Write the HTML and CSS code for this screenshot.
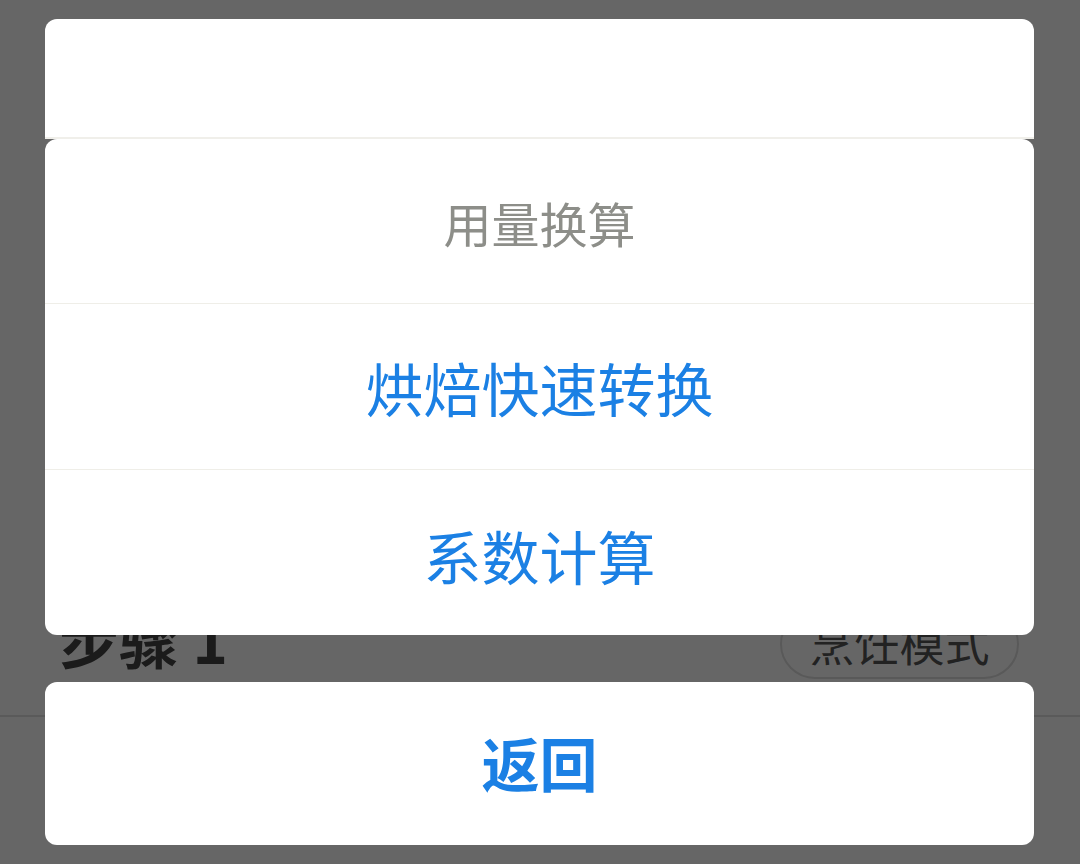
FILE: index.html
```html
<!DOCTYPE html>
<html lang="zh-CN">
<head>
<meta charset="utf-8">
<title>用量换算</title>
<link rel="stylesheet" href="styles.css">
</head>
<body>
<div class="page">
  <div class="content">
    <div class="step-head">
      <h2 class="step-title">步骤 1</h2>
      <button class="mode-btn">烹饪模式</button>
    </div>
  </div>
  <div class="bottom-bar"></div>
</div>

<div class="overlay">
  <div class="top-card"></div>
  <div class="sheet">
    <div class="sheet-title">用量换算</div>
    <div class="sheet-item">烘焙快速转换</div>
    <div class="sheet-item">系数计算</div>
  </div>
  <div class="cancel">返回</div>
</div>
</body>
</html>
```

FILE: styles.css
```css
* { box-sizing: border-box; }

html, body {
  margin: 0;
  padding: 0;
  height: 100%;
}

body {
  font-family: "Noto Sans CJK SC", "Noto Sans", sans-serif;
  background: #ffffff;
  overflow: hidden;
}

.page {
  height: 100vh;
  display: flex;
  flex-direction: column;
  background: #ffffff;
}

.content {
  flex: 1;
  display: flex;
  flex-direction: column;
  justify-content: flex-end;
  padding: 0 61px 36px 59px;
}

.step-head {
  height: 70px;
  display: flex;
  align-items: center;
  justify-content: space-between;
}

.step-title {
  margin: 0;
  padding-bottom: 12px;
  font-size: 60px;
  font-weight: 700;
  color: #444444;
  line-height: 1;
}

.mode-btn {
  height: 70px;
  width: 239px;
  border: 2px solid #dedede;
  border-radius: 35px;
  background: #ffffff;
  font-family: inherit;
  font-size: 45px;
  color: #555555;
  padding: 0 0 4px;
  line-height: 1;
}

.bottom-bar {
  height: 149px;
  border-top: 2px solid #e2e2e2;
  background: #ffffff;
}

.overlay {
  position: fixed;
  inset: 0;
  background: rgba(0, 0, 0, 0.6);
  display: flex;
  flex-direction: column;
  padding: 19px 46px 19px 45px;
}

.top-card {
  height: 120px;
  flex: none;
  background: #ffffff;
  border-radius: 12px 12px 0 0;
  border-bottom: 2px solid #f0efea;
}

.sheet {
  flex: none;
  background: #ffffff;
  border-radius: 12px;
  display: flex;
  flex-direction: column;
  overflow: hidden;
}

.sheet-title {
  height: 164px;
  display: flex;
  align-items: center;
  justify-content: center;
  font-size: 48px;
  color: #8d8e89;
  padding-top: 2px;
}

.sheet-item {
  height: 166px;
  display: flex;
  align-items: center;
  justify-content: center;
  border-top: 1px solid #efeee8;
  font-size: 58px;
  color: #1b80e4;
  padding-top: 1px;
}

.sheet-item:last-child {
  height: 166px;
  padding-top: 4px;
}

.cancel {
  margin-top: auto;
  height: 163px;
  flex: none;
  background: #ffffff;
  border-radius: 12px;
  display: flex;
  align-items: center;
  justify-content: center;
  font-size: 58px;
  font-weight: 700;
  color: #1b80e4;
  padding-bottom: 3px;
}
```
